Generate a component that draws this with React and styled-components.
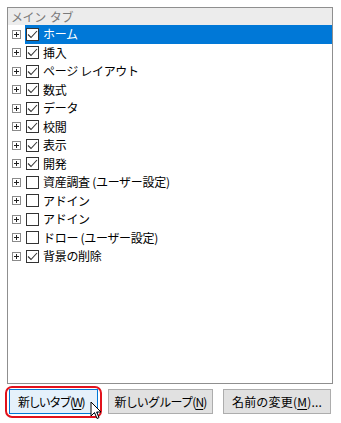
import React from 'react';
import styled, { createGlobalStyle } from 'styled-components';

const GlobalStyle = createGlobalStyle`
  html, body {
    margin: 0;
    padding: 0;
    background: #ffffff;
  }
  body {
    font-family: "Noto Sans CJK JP", "Noto Sans", sans-serif;
    font-size: 12px;
    color: #000;
  }
`;

const Page = styled.div`
  width: 341px;
  height: 423px;
  box-sizing: border-box;
  padding: 7px 8px 0 7px;
  display: flex;
  flex-direction: column;
  position: relative;
`;

const ListBox = styled.div`
  height: 377px;
  border: 1px solid #8f8f8f;
  background: #fff;
  display: flex;
  flex-direction: column;
  box-sizing: border-box;
`;

const Header = styled.div`
  height: 17px;
  line-height: 17px;
  background: #ececec;
  color: #7a7a7a;
  padding-left: 3px;
  font-size: 12px;
  display: flex;
  gap: 4px;
  letter-spacing: -0.4px;
`;

const Row = styled.div`
  height: 18.5px;
  display: flex;
  align-items: center;
`;

const Expander = styled.span`
  width: 9px;
  height: 9px;
  margin-left: 4px;
  border: 1px solid #8a8a8a;
  box-sizing: border-box;
  position: relative;
  flex-shrink: 0;

  &::before, &::after {
    content: '';
    position: absolute;
    background: #222;
  }
  &::before {
    left: 1px;
    right: 1px;
    top: 3px;
    height: 1px;
  }
  &::after {
    top: 1px;
    bottom: 1px;
    left: 3px;
    width: 1px;
  }
`;

const Item = styled.div`
  flex: 1;
  height: 100%;
  margin-left: 4px;
  display: flex;
  align-items: center;
  background: ${(p) => (p.$selected ? '#0078d7' : 'transparent')};
  color: ${(p) => (p.$selected ? '#fff' : '#000')};
`;

const Check = styled.span`
  width: 13px;
  height: 13px;
  margin-left: 1px;
  border: 1px solid #333;
  background: #fff;
  box-sizing: border-box;
  display: flex;
  align-items: center;
  justify-content: center;
  flex-shrink: 0;
`;

const Label = styled.span`
  margin-left: 4px;
  white-space: nowrap;
  line-height: 1;
  letter-spacing: -0.3px;
`;

const ButtonBar = styled.div`
  display: flex;
  gap: 10px;
  margin-top: 5px;
  padding-left: 2px;
`;

const Button = styled.div`
  height: 25px;
  box-sizing: border-box;
  display: flex;
  align-items: center;
  justify-content: ${(p) => (p.$focus ? 'flex-start' : 'center')};
  padding-left: ${(p) => (p.$focus ? 8 : 0)}px;
  border: 1px solid ${(p) => (p.$focus ? '#0078d7' : '#adadad')};
  background: ${(p) => (p.$focus ? '#e5f1fb' : '#e1e1e1')};
  white-space: nowrap;
  font-size: 12px;
  letter-spacing: ${(p) => p.$ls}px;
  width: ${(p) => p.$w}px;
  position: relative;
  u {
    text-decoration: underline;
    text-underline-offset: 2px;
  }
`;

const Highlight = styled.div`
  position: absolute;
  left: -5px;
  top: -4px;
  right: -5px;
  bottom: -5px;
  border: 2.5px solid #e2121c;
  border-radius: 7px;
  pointer-events: none;
`;

const Cursor = styled.svg`
  position: absolute;
  left: 90px;
  top: 401px;
`;

const tick = (
  <svg width="11" height="9" viewBox="0 0 11 9">
    <path d="M1 4.5 L4 7.5 L10 1" fill="none" stroke="#333" strokeWidth="1.1" />
  </svg>
);

const items = [
  ['ホーム', true],
  ['挿入', true],
  ['ページ レイアウト', true],
  ['数式', true],
  ['データ', true],
  ['校閲', true],
  ['表示', true],
  ['開発', true],
  ['資産調査 (ユーザー設定)', false],
  ['アドイン', false],
  ['アドイン', false],
  ['ドロー (ユーザー設定)', false],
  ['背景の削除', true],
];

export default function App() {
  return (
    <>
      <GlobalStyle />
      <Page>
        <ListBox>
          <Header>
            <span>メイン</span>
            <span>タブ</span>
          </Header>
          {items.map(([name, checked], i) => (
            <Row key={i}>
              <Expander />
              <Item $selected={i === 0}>
                <Check>{checked && tick}</Check>
                <Label>{name}</Label>
              </Item>
            </Row>
          ))}
        </ListBox>
        <ButtonBar>
          <Button $focus $w={89} $ls={-1.6}>
            新しいタブ(<u>W</u>)
            <Highlight />
          </Button>
          <Button $w={105} $ls={-0.8}>新しいグループ(<u>N</u>)</Button>
          <Button $w={108} $ls={0.2}>名前の変更(<u>M</u>)...</Button>
        </ButtonBar>
        <Cursor width="12" height="20" viewBox="0 0 12 20">
          <path d="M1 1 L1 15 L4.5 11.5 L7 17.5 L9 16.6 L6.6 11 L11 11 Z" fill="#fff" stroke="#000" strokeWidth="1" />
        </Cursor>
      </Page>
    </>
  );
}
